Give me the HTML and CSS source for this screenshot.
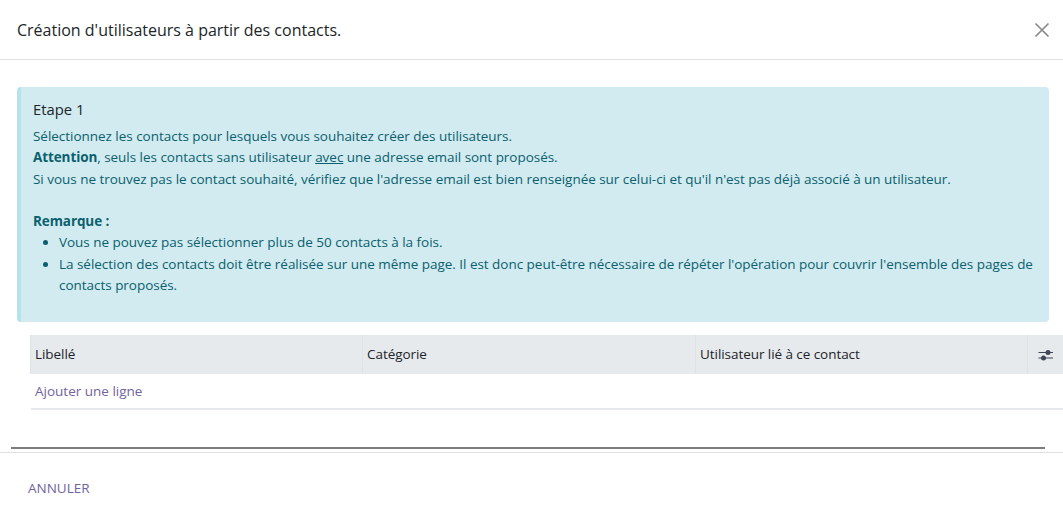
FILE: index.html
```html
<!DOCTYPE html>
<html lang="fr">
<head>
<meta charset="utf-8">
<title>Création d'utilisateurs</title>
<link rel="stylesheet" href="styles.css">
</head>
<body>
<div class="modal">
  <header class="modal-header">
    <h4 class="modal-title">Création d'utilisateurs à partir des contacts.</h4>
    <svg class="close" width="16" height="16" viewBox="0 0 16 16"><path d="M1.5 1.5 L14.5 14.5 M14.5 1.5 L1.5 14.5" stroke="#8a8a8a" stroke-width="1.7" fill="none"/></svg>
  </header>
  <main class="modal-body">
    <section class="alert">
      <h5 class="alert-title">Etape 1</h5>
      <p>Sélectionnez les contacts pour lesquels vous souhaitez créer des utilisateurs.</p>
      <p><strong>Attention</strong>, seuls les contacts sans utilisateur <u>avec</u> une adresse email sont proposés.</p>
      <p>Si vous ne trouvez pas le contact souhaité, vérifiez que l'adresse email est bien renseignée sur celui-ci et qu'il n'est pas déjà associé à un utilisateur.</p>
      <p class="blank">&nbsp;</p>
      <p><strong>Remarque :</strong></p>
      <ul>
        <li>Vous ne pouvez pas sélectionner plus de 50 contacts à la fois.</li>
        <li>La sélection des contacts doit être réalisée sur une même page. Il est donc peut-être nécessaire de répéter l'opération pour couvrir l'ensemble des pages de contacts proposés.</li>
      </ul>
    </section>
    <div class="table">
      <div class="thead">
        <div class="th">Libellé</div>
        <div class="th">Catégorie</div>
        <div class="th">Utilisateur lié à ce contact</div>
        <div class="th th-opt">
          <svg width="16" height="14" viewBox="0 0 16 14"><path d="M0.5 4.5 H15 M0.5 10 H15" stroke="#3f4656" stroke-width="1.2"/><circle cx="10" cy="4.5" r="2.5" fill="#3f4656"/><circle cx="5.5" cy="10" r="2.5" fill="#3f4656"/></svg>
        </div>
      </div>
      <div class="add-row"><a href="#">Ajouter une ligne</a></div>
    </div>
    <div class="dark-line"></div>
  </main>
  <footer class="modal-footer"><a href="#">ANNULER</a></footer>
</div>
</body>
</html>
```
FILE: styles.css
```css
html, body { margin: 0; padding: 0; background: #fff; }
body { font-family: "Open Sans", "Noto Sans", sans-serif; font-size: 13.5px; line-height: 21px; color: #212529; width: 1063px; height: 513px; overflow: hidden; }
.modal { display: flex; flex-direction: column; height: 513px; }
.modal-header { height: 59px; border-bottom: 1px solid #dee2e6; display: flex; align-items: center; justify-content: space-between; padding: 0 13px 0 17px; }
.modal-title { margin: 0; font-size: 16px; font-weight: 400; line-height: 24px; }
.close { display: block; }
.modal-body { padding: 27px 1px 0 17px; height: 392px; box-sizing: border-box; }
.alert { width: 1032px; height: 235px; box-sizing: border-box; background: #d1ebf0; border-left: 4px solid #b8e2ea; border-radius: 4px; padding: 12px 12px 0 12px; color: #0b5f6e; line-height: 21.3px; }
.alert-title { margin: 0 0 6px; font-size: 14.8px; font-weight: 400; line-height: 21px; color: #212529; }
.alert p { margin: 0; letter-spacing: -0.03px; }
.alert strong { font-weight: 700; letter-spacing: -0.1px; }
.alert ul { margin: 0; padding-left: 26px; }
.alert li { letter-spacing: -0.03px; }
.table { margin: 13px 0 0 13px; width: 1033px; }
.thead { display: grid; grid-template-columns: 333px 333px 332px 35px; height: 39px; background: #e7eaed; }
.th { display: flex; align-items: center; padding-left: 4px; border-right: 1px solid #dfe3e6; letter-spacing: -0.06px; color: #212529; }
.th:first-child { border-left: 1px solid #dfe3e6; }
.th-opt { border-right: 0; justify-content: center; padding: 0; }
.add-row { height: 34px; display: flex; align-items: center; margin-left: 1px; padding-left: 4px; border-bottom: 2px solid #e7eaed; }
a { color: #71639e; text-decoration: none; }
.dark-line { margin: 37px 0 0 -6px; width: 1034px; height: 2px; background: #7d7d7d; }
.modal-footer { border-top: 1px solid #dee2e6; padding: 25px 0 0 28px; }
```
